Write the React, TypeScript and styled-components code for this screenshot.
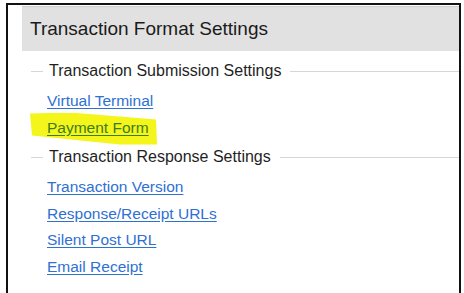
import styled, { createGlobalStyle } from 'styled-components'

const GlobalStyle = createGlobalStyle`
  html, body {
    margin: 0;
    padding: 0;
    background: #ffffff;
    font-family: 'Liberation Sans', Arial, sans-serif;
  }
`

// --- Layout ---

const Frame = styled.div`
  box-sizing: border-box;
  margin: 3px 0 0 6px;
  width: 455px;
  height: 300px;
  border: 2px solid #111;
  border-bottom: none;
  padding: 1px 0 0 14px;
  overflow: hidden;
`

const Header = styled.div`
  box-sizing: border-box;
  height: 45px;
  display: flex;
  align-items: center;
  padding-left: 8px;
  background: #e1e1e1;
  border-top: 1px solid #cfcfcf;
  color: #1b1b1b;
  font-size: 19px;
`

const Body = styled.div`
  display: flex;
  flex-direction: column;
  gap: 2px;
  padding-top: 6px;
`

const SectionTitle = styled.div`
  display: flex;
  align-items: center;
  height: 28px;
  padding-left: 9px;
  font-size: 16px;
  color: #1f1f1f;

  &::before,
  &::after {
    content: '';
    height: 1px;
    background: #d6d6d6;
  }
  &::before {
    width: 12px;
    margin-right: 6px;
  }
  &::after {
    flex: 1;
    margin-left: 9px;
  }
`

const LinkList = styled.div`
  display: flex;
  flex-direction: column;
  padding: 3px 0 0 25px;
`

const LinkRow = styled.div<{ $marked?: boolean }>`
  position: relative;
  height: 26.5px;
  display: flex;
  align-items: center;

  ${(p) =>
    p.$marked &&
    `
    &::before {
      content: '';
      position: absolute;
      left: -17px;
      top: -2px;
      width: 127px;
      height: 33px;
      background: #f4f51a;
      clip-path: polygon(0 1px, 40px 0, 126px 7px, 127px 32px, 90px 32px, 2px 23px);
    }
  `}
`

const Link = styled.a<{ $marked?: boolean }>`
  position: relative;
  font-size: 15.5px;
  color: ${(p) => (p.$marked ? '#3d7d22' : '#2f70d3')};
  text-decoration: underline;
  text-underline-offset: 2px;
  cursor: pointer;
`

// --- Data ---

const sections = [
  {
    title: 'Transaction Submission Settings',
    links: ['Virtual Terminal', 'Payment Form']
  },
  {
    title: 'Transaction Response Settings',
    links: ['Transaction Version', 'Response/Receipt URLs', 'Silent Post URL', 'Email Receipt']
  }
]

export default function App() {
  return (
    <>
      <GlobalStyle />
      <Frame>
        <Header>Transaction Format Settings</Header>
        <Body>
          {sections.map((s) => (
            <div key={s.title}>
              <SectionTitle>{s.title}</SectionTitle>
              <LinkList>
                {s.links.map((l) => {
                  const marked = l === 'Payment Form'
                  return (
                    <LinkRow key={l} $marked={marked}>
                      <Link $marked={marked}>{l}</Link>
                    </LinkRow>
                  )
                })}
              </LinkList>
            </div>
          ))}
        </Body>
      </Frame>
    </>
  )
}
